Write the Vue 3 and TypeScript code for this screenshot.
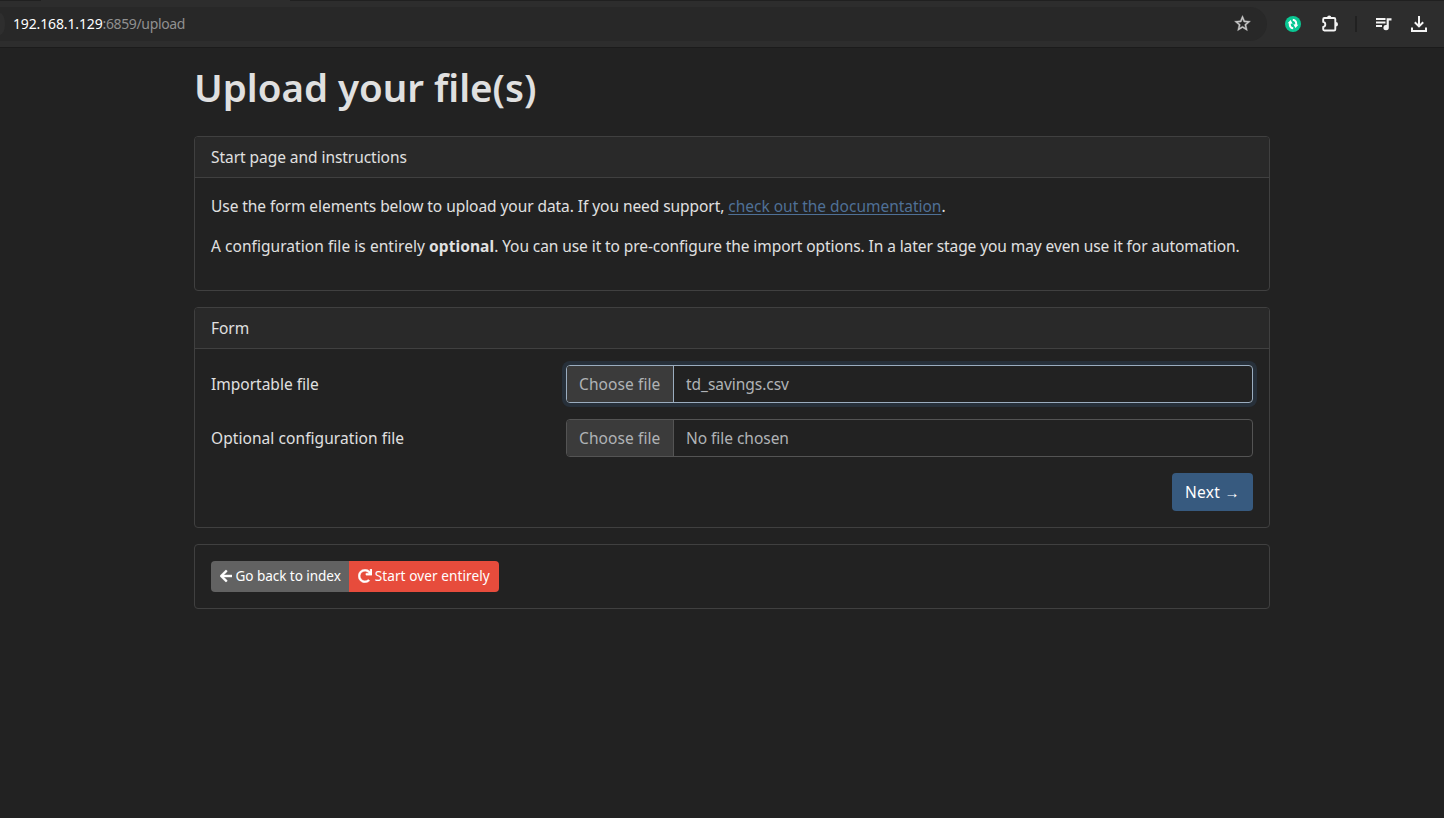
<script setup lang="ts">
interface FileField {
  label: string
  value: string
  focused: boolean
  labelClass: string
}

const fields: FileField[] = [
  { label: 'Importable file', value: 'td_savings.csv', focused: true, labelClass: '' },
  { label: 'Optional configuration file', value: 'No file chosen', focused: false, labelClass: 'loose' },
]
</script>

<template>
  <div class="window">
    <div class="tab-strip"><i class="active-tab"></i></div>
    <header class="toolbar">
      <div class="address">
        <i class="site-chip"></i>
        <span class="url"><span class="host">192.168.1.129</span><span class="path">:6859/upload</span></span>
        <svg class="star" viewBox="0 0 24 24" width="19" height="19"><path fill="currentColor" stroke="currentColor" stroke-width=".5" d="m22 9.24-7.19-.62L12 2 9.19 8.63 2 9.24l5.46 4.73L5.82 21 12 17.27 18.18 21l-1.63-7.03L22 9.24zM12 15.4l-3.76 2.27 1-4.28-3.32-2.88 4.38-.38L12 6.1l1.71 4.04 4.38.38-3.32 2.88 1 4.28L12 15.4z" /></svg>
      </div>
      <svg class="sync" viewBox="0 0 16 16" width="16" height="16">
        <circle cx="8" cy="8" r="8" fill="#0ac793" />
        <path d="M8.2 12.3C5.4 12.1 4.2 9.6 5 6.5M7.800 3.700c2.800.2 4 2.700 3.200 5.800" fill="none" stroke="#fff" stroke-width="2" />
        <path d="M2.600 7.200 5.600 4l2 3.700zM13.400 8.800l-3 3.200-2-3.700z" fill="#fff" />
      </svg>
      <svg class="puzzle" viewBox="0 0 18 18" width="18" height="18">
        <path d="M3.400 3H13q1.300 0 1.300 1.300v9.900q0 1.300-1.300 1.300H3.400q-1.200 0-1.200-1.200v-2.400c2.800-.5 2.800-4.500 0-5V4.200Q2.200 3 3.400 3z" fill="none" stroke="#f4f4f4" stroke-width="1.900" stroke-linejoin="round" />
        <path d="M6.100 2.600a2.100 2.100 0 0 1 4.200 0zM14.800 7a2.200 2.200 0 0 1 0 4.400z" fill="#f4f4f4" />
      </svg>
      <i class="divider"></i>
      <svg class="queue" viewBox="0 0 18 14" width="18" height="14">
        <path d="M1 2h9.500M1 5.500h9.500M1 9h6" stroke="#f4f4f4" stroke-width="1.900" />
        <path d="M11.600 1.200h4.900v2.200h-2.700v7.200a2.700 2.700 0 1 1-2.200-2.600z" fill="#f4f4f4" />
      </svg>
      <svg class="download" viewBox="0 0 16 17" width="16" height="17">
        <path d="M8 0v10M3.800 6.200 8 10.400l4.200-4.200M1 11.500V15h14v-3.500" fill="none" stroke="#f4f4f4" stroke-width="2" />
      </svg>
    </header>

    <main class="page">
      <h1>Upload your file(s)</h1>

      <section class="card intro">
        <h2 class="card-header">Start page and instructions</h2>
        <div class="card-body">
          <p><span class="tight">Use the form elements below to upload your data. If you need support, </span><a href="#">check out the documentation</a>.</p>
          <p><span class="lead">A configuration file is entirely </span><strong>optional</strong><span class="tighter">. You can use it to pre-configure the import options. In a later stage you may even use it for automation.</span></p>
        </div>
      </section>

      <section class="card">
        <h2 class="card-header">Form</h2>
        <div class="card-body">
          <div v-for="field in fields" :key="field.label" class="row">
            <label :class="field.labelClass">{{ field.label }}</label>
            <div class="file" :class="{ focused: field.focused }">
              <span class="choose">Choose file</span>
              <span class="name">{{ field.value }}</span>
            </div>
          </div>
          <div class="actions"><button class="next">Next <span class="arrow">→</span></button></div>
        </div>
      </section>

      <section class="card">
        <div class="card-body group">
          <button class="back">
            <svg viewBox="0 0 448 512" width="12.25" height="14"><path fill="currentColor" stroke="currentColor" stroke-width="14" d="M257.500 445.100l-22.200 22.200c-9.400 9.400-24.600 9.400-33.900 0L7 273c-9.400-9.400-9.400-24.600 0-33.900L201.400 44.700c9.400-9.400 24.600-9.400 33.900 0l22.200 22.200c9.500 9.500 9.300 25-.4 34.300L136.600 216H424c13.300 0 24 10.700 24 24v32c0 13.300-10.700 24-24 24H136.600l120.500 114.800c9.800 9.300 10 24.800.4 34.300z" /></svg>
            <span>Go back to index</span>
          </button>
          <button class="restart">
            <svg viewBox="0 0 512 512" width="14" height="14"><path fill="currentColor" stroke="currentColor" stroke-width="14" d="M500.330 0h-47.410a12 12 0 0 0-12 12.570l4 82.760A247.420 247.420 0 0 0 256 8C119.340 8 7.900 119.530 8 256.190 8.100 393.070 119.100 504 256 504a247.100 247.100 0 0 0 166.180-63.910 12 12 0 0 0 .48-17.430l-34-34a12 12 0 0 0-16.380-.55A176 176 0 1 1 402.100 157.800l-101.530-4.870a12 12 0 0 0-12.570 12v47.410a12 12 0 0 0 12 12h200.330a12 12 0 0 0 12-12V12a12 12 0 0 0-12-12z" /></svg>
            <span>Start over entirely</span>
          </button>
        </div>
      </section>
    </main>
  </div>
</template>

<style>
body { background: #222; }
</style>

<style scoped>
* { box-sizing: border-box; }
svg { flex-shrink: 0; }
.window { min-height: 818px; background: #222; color: #e0e0e0; font: 15.5px/24px "Noto Sans", sans-serif; }
.tab-strip { height: 1px; background: #202020; }
.active-tab { display: block; width: 249px; height: 1px; margin-left: 41px; background: #2d2d2d; }
.toolbar { display: flex; align-items: center; height: 47px; background: #2d2d2d; border-bottom: 1px solid #1b1b1b; padding-right: 17px; }
.address { display: flex; align-items: center; width: 1267px; height: 34px; padding-right: 15px; background: #282828; border-radius: 0 17px 17px 0; }
.site-chip { width: 5px; height: 22px; margin-right: 8px; background: #2e2e2e; border-radius: 0 5px 5px 0 / 0 11px 11px 0; }
.url { color: #909090; font-size: 14px; }
.host { color: #fff; letter-spacing: -0.14px; }
.path { letter-spacing: -0.36px; }
.star { margin-left: auto; margin-bottom: 1px; color: #c7c7c7; }
.sync { margin-left: 18px; }
.puzzle { margin-left: 20px; }
.divider { width: 2px; height: 16px; margin: 0 18px 0 16px; background: #212121; }
.download { margin-left: auto; }
.page { width: 1076px; margin-left: 194px; padding-top: 15px; }
h1 { margin: 0 0 25px; font-size: 38.5px; line-height: 48px; font-weight: 600; letter-spacing: -0.02px; color: #e0e0e0; }
.card { border: 1px solid #404040; border-radius: 4px; margin-bottom: 16px; }
.card-header { margin: 0; height: 41px; padding: 8px 16px; font-size: inherit; font-weight: 400; line-height: 24px; letter-spacing: -0.05px; background: #292929; border-bottom: 1px solid #404040; border-radius: 3px 3px 0 0; }
.card-body { padding: 16px; }
.card-body p { margin: 0 0 16px; white-space: pre; }
.intro { height: 155px; }
.tight { letter-spacing: -0.06px; }
.tighter { letter-spacing: -0.083px; }
.lead { letter-spacing: 0.05px; }
strong { letter-spacing: 0.08px; }
a { color: #4f7096; letter-spacing: -0.02px; text-underline-offset: 2px; }
.row { display: flex; align-items: center; margin-bottom: 16px; }
label { width: 355px; }
.loose { letter-spacing: 0.07px; }
.file { display: flex; flex: 1; height: 38px; border: 1px solid #545454; border-radius: 4px; color: #b0b3b6; }
.focused { border-color: #9badbf; box-shadow: 0 0 0 4px #27303a; }
.choose { width: 107px; padding: 6px 12px; letter-spacing: 0.09px; background: #3b3b3b; border-right: 1px solid #545454; border-radius: 3px 0 0 3px; }
.focused .choose { border-color: #9badbf; }
.name { padding: 6px 12px; letter-spacing: -0.04px; }
.actions { display: flex; justify-content: flex-end; }
button { border: 0; color: #fff; font: inherit; white-space: nowrap; }
.next { width: 81px; height: 38px; padding: 0 13px; text-align: left; letter-spacing: 0.3px; background: #375a7f; border-radius: 4px; }
.arrow { font-size: 15px; }
.group { display: flex; height: 63px; }
.group button { display: flex; align-items: center; gap: 3.3px; height: 31px; padding: 0 9px 2px; font-size: 13.6px; }
.back { width: 138px; letter-spacing: -0.08px; background: #626262; border-radius: 4px 0 0 4px; }
.restart { width: 150px; letter-spacing: 0.08px; background: #e74c3c; border-radius: 0 4px 4px 0; }
.group .restart { gap: 2.7px; }
</style>
